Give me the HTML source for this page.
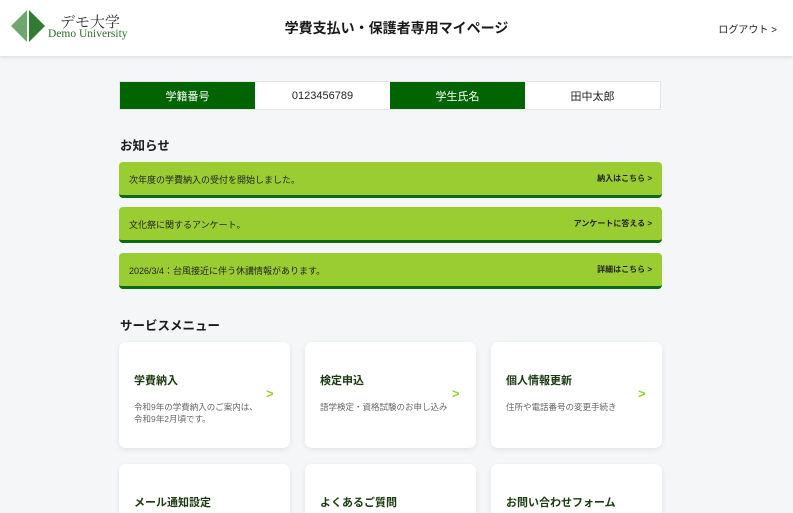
<!DOCTYPE html>
<html><head><meta charset="utf-8"><style>
*{margin:0;padding:0;box-sizing:border-box}
html,body{width:793px;height:513px;overflow:hidden}
body{background:#f5f6f8;font-family:"Liberation Sans","Noto Sans CJK JP",sans-serif;color:#222;position:relative}
.hdr{position:absolute;left:0;top:0;width:793px;height:56px;background:#fff;box-shadow:0 1px 4px rgba(0,0,0,.12)}
.logo{position:absolute;left:11px;top:10px}
.lt1{position:absolute;left:60px;top:11px;font-family:"Liberation Serif","Noto Serif CJK SC",serif;font-size:15px;color:#333}
.lt2{position:absolute;left:48px;top:28px;font-family:"Liberation Serif",serif;font-size:11.5px;color:#2e6b2e}
.title{position:absolute;left:0;width:793px;top:18px;text-align:center;font-size:14px;font-weight:bold;color:#1a1a1a}
.logout{position:absolute;right:16px;top:21px;font-size:10px;color:#222}
.tbl{position:absolute;left:119px;top:81px;width:542px;height:29px;display:flex;border:1px solid #e2e4e8}
.tbl div{flex:1;display:flex;align-items:center;justify-content:center;font-size:11px;background:#fff}
.tbl .g{background:#006400;color:#fff}
h2{position:absolute;left:120px;font-size:12.5px;font-weight:bold;color:#1a1a1a}
.n{position:absolute;left:119px;width:543px;height:36px;background:#9acd32;border-bottom:3px solid #0b6b12;border-radius:4px;font-size:9px;color:#222}
.n span{position:absolute;left:10px;top:11px}
.n b{position:absolute;right:10px;top:11px;font-size:8px}
.c{position:absolute;width:171px;height:106px;background:#fff;border-radius:7px;box-shadow:0 2px 6px rgba(0,0,0,.08)}
.c.b{height:49px;border-radius:7px 7px 0 0}
.c h3{position:absolute;left:15px;top:30px;font-size:11px;font-weight:bold;color:#1b3a12}
.c p{position:absolute;left:15px;top:59px;width:130px;font-size:8.5px;line-height:12px;color:#666}
.c i{position:absolute;left:147px;top:44px;font-style:normal;font-weight:bold;font-size:13px;color:#9acd32}
</style></head><body>
<div class="hdr">
<svg class="logo" width="34" height="32" viewBox="0 0 34 32"><polygon points="16,0 0,16 16,32" fill="#6fa86f"/><polygon points="18,0 34,16 18,32" fill="#2e7d32"/></svg>
<div class="lt1">デモ大学</div>
<div class="lt2">Demo University</div>
<div class="title">学費支払い・保護者専用マイページ</div>
<div class="logout">ログアウト &gt;</div>
</div>
<div class="tbl"><div class="g">学籍番号</div><div>0123456789</div><div class="g">学生氏名</div><div>田中太郎</div></div>
<h2 style="top:135px">お知らせ</h2>
<div class="n" style="top:162px"><span>次年度の学費納入の受付を開始しました。</span><b>納入はこちら &gt;</b></div>
<div class="n" style="top:207px"><span>文化祭に関するアンケート。</span><b>アンケートに答える &gt;</b></div>
<div class="n" style="top:253px"><span>2026/3/4：台風接近に伴う休講情報があります。</span><b>詳細はこちら &gt;</b></div>
<h2 style="top:315px">サービスメニュー</h2>
<div class="c" style="left:119px;top:342px"><h3>学費納入</h3><p>令和9年の学費納入のご案内は、令和9年2月頃です。</p><i>&gt;</i></div>
<div class="c" style="left:305px;top:342px"><h3>検定申込</h3><p>語学検定・資格試験のお申し込み</p><i>&gt;</i></div>
<div class="c" style="left:491px;top:342px"><h3>個人情報更新</h3><p>住所や電話番号の変更手続き</p><i>&gt;</i></div>
<div class="c b" style="left:119px;top:464px"><h3>メール通知設定</h3></div>
<div class="c b" style="left:305px;top:464px"><h3>よくあるご質問</h3></div>
<div class="c b" style="left:491px;top:464px"><h3>お問い合わせフォーム</h3></div>
</body></html>
